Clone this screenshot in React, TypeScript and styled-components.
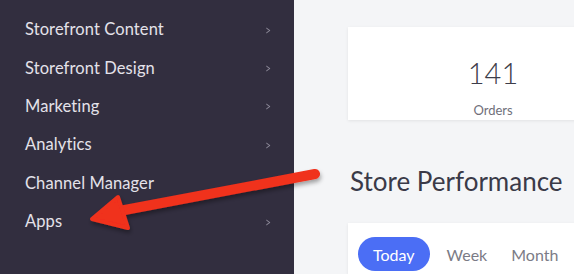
import styled, { createGlobalStyle } from "styled-components";

const GlobalStyle = createGlobalStyle`
  body {
    margin: 0;
    font-family: "Lato", "Open Sans", sans-serif;
    -webkit-font-smoothing: antialiased;
  }
`;

const Page = styled.div`
  position: relative;
  display: flex;
  width: 574px;
  height: 274px;
  overflow: hidden;
  background: #f4f5f7;
`;

const Sidebar = styled.nav`
  display: flex;
  flex-direction: column;
  flex: 0 0 294px;
  padding: 10px 0 0;
  background: #322e3f;
`;

const MenuItem = styled.div`
  display: flex;
  align-items: center;
  justify-content: space-between;
  height: 38.4px;
  padding: 0 22px 0 25px;
  color: #e4e2ea;
  font-size: 16.5px;
  letter-spacing: 0.1px;
`;

const Chevron = styled.span`
  color: #8d8a99;
  font-size: 14px;
  transform: scaleX(0.7);
`;

const Main = styled.main`
  flex: 1;
  display: flex;
  flex-direction: column;
  padding: 27px 0 0 54px;
  min-width: 0;
`;

const StatCard = styled.div`
  display: flex;
  flex-direction: column;
  align-items: center;
  width: 290px;
  height: 109px;
  padding-top: 28px;
  box-sizing: border-box;
  background: #fff;
  box-shadow: 0 1px 3px rgba(0, 0, 0, 0.08);
`;

const StatValue = styled.div`
  font-size: 29px;
  font-weight: 300;
  color: #3d3d4a;
  line-height: 36px;
`;

const StatLabel = styled.div`
  margin-top: 11px;
  font-size: 13px;
  color: #6f6f7a;
`;

const Heading = styled.h2`
  margin: 44px 0 0 2px;
  font-size: 26px;
  font-weight: 400;
  color: #3a3a48;
  line-height: 34px;
`;

const TabsCard = styled.div`
  display: flex;
  align-items: flex-start;
  gap: 10px;
  margin-top: 25px;
  width: 290px;
  height: 60px;
  padding: 14px 0 0 10px;
  box-sizing: border-box;
  background: #fff;
  box-shadow: 0 1px 3px rgba(0, 0, 0, 0.08);
`;

const Tab = styled.div<{ $active?: boolean }>`
  display: flex;
  align-items: center;
  height: 34px;
  padding: ${({ $active }) => ($active ? "0 15px" : "0 7px")};
  border-radius: 17px;
  font-size: 16px;
  color: ${({ $active }) => ($active ? "#fff" : "#7b7b86")};
  background: ${({ $active }) => ($active ? "#4b6ef5" : "transparent")};
`;

const ArrowLayer = styled.svg`
  position: absolute;
  left: 0;
  top: 0;
  pointer-events: none;
`;

const items = [
  { name: "Storefront Content", chevron: true },
  { name: "Storefront Design", chevron: true },
  { name: "Marketing", chevron: true },
  { name: "Analytics", chevron: true },
  { name: "Channel Manager", chevron: false },
  { name: "Apps", chevron: true },
];

export default function App() {
  return (
    <>
      <GlobalStyle />
      <Page>
        <Sidebar>
          {items.map((item) => (
            <MenuItem key={item.name}>
              {item.name}
              {item.chevron && <Chevron>&gt;</Chevron>}
            </MenuItem>
          ))}
        </Sidebar>
        <Main>
          <StatCard>
            <StatValue>141</StatValue>
            <StatLabel>Orders</StatLabel>
          </StatCard>
          <Heading>Store Performance</Heading>
          <TabsCard>
            <Tab $active>Today</Tab>
            <Tab>Week</Tab>
            <Tab>Month</Tab>
          </TabsCard>
        </Main>
        <ArrowLayer width="574" height="274" viewBox="0 0 574 274">
          <defs>
            <filter id="shadow" x="-20%" y="-50%" width="140%" height="200%">
              <feDropShadow dx="1" dy="3" stdDeviation="2" floodColor="#000" floodOpacity="0.35" />
            </filter>
          </defs>
          <g filter="url(#shadow)">
            <line x1="315" y1="174" x2="114" y2="212" stroke="#f0301c" strokeWidth="10" strokeLinecap="round" />
            <polygon points="92,219 118,197 128,228" fill="#f0301c" stroke="#f0301c" strokeWidth="4" strokeLinejoin="round" />
          </g>
        </ArrowLayer>
      </Page>
    </>
  );
}
